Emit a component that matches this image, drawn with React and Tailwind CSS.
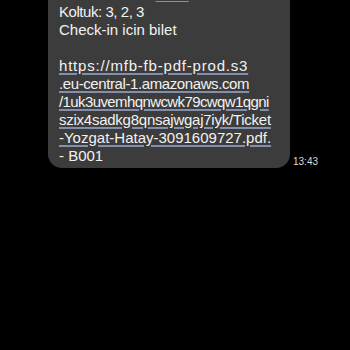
export default function App() {
  const link = [
    { t: "https://mfb-fb-pdf-prod.s3", c: "tracking-[0.8px]" },
    { t: ".eu-central-1.amazonaws.com", c: "tracking-[-0.4px]" },
    { t: "/1uk3uvemhqnwcwk79cwqw1qgni", c: "tracking-[-0.6px]" },
    { t: "szix4sadkg8qnsajwgaj7iyk/Ticket", c: "tracking-[-0.25px]" },
    { t: "-Yozgat-Hatay-3091609727.pdf.", c: "tracking-[0px]" },
  ];

  return (
    <div className="h-[350px] w-[350px] overflow-hidden bg-black font-['Liberation_Sans',sans-serif]">
      <div className="flex items-end">
        <div className="ml-[48px] mt-[-27px] w-[242px] rounded-b-[14px] bg-[#3c3c3c] pl-[11px] pr-2 pb-[4px] pt-[12px] text-[15px] leading-[18px] text-[#f2f2f2]">
          <p>
            Peron: 12 Tel:{" "}
            <span className="underline decoration-[#8290ad] underline-offset-2">4440</span>
          </p>
          <p className="tracking-[-0.45px]">Koltuk: 3, 2, 3</p>
          <p>Check-in icin bilet</p>
          <p className="h-[18px]"></p>
          {link.map((l) => (
            <p
              key={l.t}
              className={`${l.c} underline decoration-[#8290ad] decoration-[1.5px] underline-offset-[2px] whitespace-nowrap`}
            >
              {l.t}
            </p>
          ))}
          <p className="leading-[17px]">- B001</p>
        </div>
        <span className="ml-[3px] text-[10px] leading-[12px] text-[#dcdcdc]">13:43</span>
      </div>
    </div>
  );
}
